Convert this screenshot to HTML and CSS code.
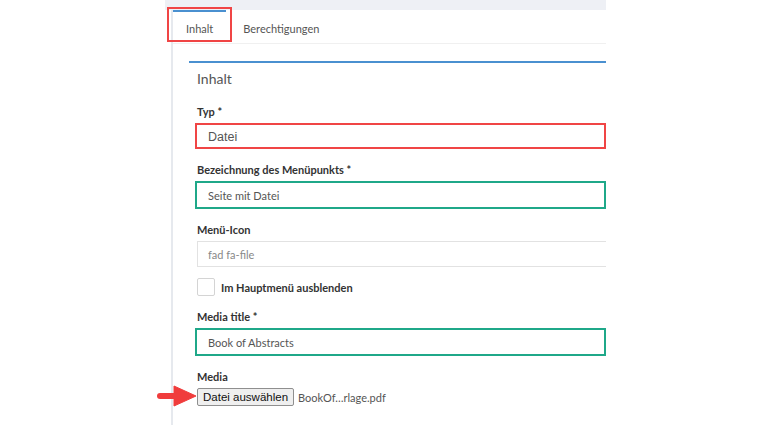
FILE: index.html
```html
<!DOCTYPE html>
<html lang="de">
<head>
    <meta charset="UTF-8">
    <meta name="viewport" content="width=device-width, initial-scale=1.0">
    <title>Menüpunkt bearbeiten</title>
    <link rel="stylesheet" href="styles.css">
</head>
<body>
    <div class="frame">
        <div class="page">
            <div class="topbar"></div>

            <div class="panel">
                <div class="tabs">
                    <div class="tab active">
                        Inhalt
                        <span class="mark-box"></span>
                    </div>
                    <div class="tab">Berechtigungen</div>
                </div>

                <div class="card">
                    <h2 class="card-title">Inhalt</h2>

                    <div class="form-group">
                        <label class="label">Typ *</label>
                        <div class="input select hl-red">Datei</div>
                    </div>

                    <div class="form-group">
                        <label class="label">Bezeichnung des Menüpunkts *</label>
                        <div class="input hl-green">Seite mit Datei</div>
                    </div>

                    <div class="form-group">
                        <label class="label">Menü-Icon</label>
                        <div class="input muted">fad fa-file</div>
                    </div>

                    <div class="form-group check-row">
                        <span class="checkbox"></span>
                        <span class="check-label">Im Hauptmenü ausblenden</span>
                    </div>

                    <div class="form-group">
                        <label class="label">Media title *</label>
                        <div class="input hl-green">Book of Abstracts</div>
                    </div>

                    <div class="form-group">
                        <label class="label">Media</label>
                        <div class="file-row">
                            <svg class="arrow" width="42" height="22" viewBox="0 0 42 22">
                                <path d="M4 8 H20 V14 H4 A3 3 0 0 1 4 8 Z" fill="#f03c3c"/>
                                <path d="M18 1 L40 11 L18 21 Z" fill="#f03c3c" stroke="#f03c3c" stroke-width="1" stroke-linejoin="round"/>
                            </svg>
                            <button class="file-btn">Datei auswählen</button>
                            <span class="file-name">BookOf…rlage.pdf</span>
                        </div>
                    </div>
                </div>
            </div>
        </div>
    </div>
</body>
</html>
```

FILE: styles.css
```css
body {
    margin: 0;
    background: #fff;
    font-family: Lato, "Open Sans", sans-serif;
    color: #333;
}

.frame {
    width: 606px;
    height: 425px;
    overflow: hidden;
}
.page {
    margin-left: 165px;
}

.topbar {
    height: 10px;
    background: #eef0f5;
}

.panel {
    margin-left: 6px;
    border-left: 2px solid #e6e9ee;
    height: 415px;
}

/* tabs */
.tabs {
    display: flex;
    height: 33px;
    border-bottom: 1px solid #f0f0f0;
}
.tab {
    position: relative;
    padding: 3px 13px 0;
    margin-right: 4px;
    font-size: 11px;
    color: #555;
    border-top: 2px solid transparent;
    line-height: 28px;
}
.tab.active {
    border-top-color: #4a90d0;
}
.mark-box {
    position: absolute;
    left: -6px;
    top: -5px;
    width: 61px;
    height: 31px;
    border: 2px solid #f04545;
}

/* card */
.card {
    margin: 17px 0 0 16px;
    border-top: 2px solid #4a90d0;
    padding: 0 0 0 8px;
}
.card-title {
    margin: 6px 0 13px;
    font-size: 14px;
    font-weight: normal;
    line-height: 20px;
    color: #555;
}

.form-group {
    margin-bottom: 11px;
}
.label {
    display: block;
    padding-top: 2px;
    font-size: 11px;
    font-weight: bold;
    line-height: 16px;
    margin-bottom: 3px;
    color: #333;
}

.input {
    box-sizing: border-box;
    height: 26px;
    border: 1px solid #e2e2e2;
    border-right: none;
    padding: 1px 10px 0;
    font-size: 11px;
    line-height: 24px;
    color: #555;
}
.input.muted {
    color: #888;
}
.input.select {
    font-family: "Liberation Sans", Arial, sans-serif;
    font-size: 12.5px;
}
.hl-red,
.hl-green {
    margin-left: -2px;
    padding-left: 11px;
    border-width: 2px;
    border-right-style: solid;
    line-height: 22px;
}
.hl-red {
    border-color: #f04545;
}
.hl-green {
    height: 28px;
    line-height: 24px;
    border-color: #1fa889;
}

/* checkbox */
.check-row {
    display: flex;
    align-items: center;
    gap: 6px;
}
.checkbox {
    width: 16px;
    height: 16px;
    border: 1px solid #d4d4d4;
    border-radius: 2px;
}
.check-label {
    font-size: 11px;
    font-weight: bold;
}

/* file input */
.file-row {
    position: relative;
    display: flex;
    align-items: center;
    gap: 4px;
}
.arrow {
    position: absolute;
    left: -41px;
    top: -3px;
}
.file-btn {
    height: 18px;
    padding: 0 5px;
    font-family: "Liberation Sans", Arial, sans-serif;
    font-size: 11.5px;
    color: #111;
    background: #efefef;
    border: 1px solid #8f8f8f;
    border-radius: 2px;
}
.file-name {
    font-size: 11px;
    color: #555;
}
```
